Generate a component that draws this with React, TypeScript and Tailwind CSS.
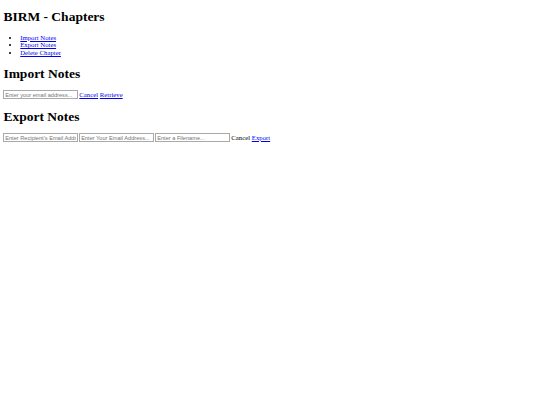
import React from 'react';

const inputCls =
  'w-[74.3px] h-[9px] box-border px-[0.85px] py-0 border border-[#a9a9a9] bg-white text-[5.63px] leading-none text-black placeholder:text-[#757575] font-["Liberation_Sans",Arial,sans-serif] outline-none';

const linkCls = 'text-[#0000ee] underline';
const headCls = 'text-[13.5px] leading-[15.5px] font-bold my-[9.05px]';

export default function App() {
  return (
    <div className="m-[3.375px] text-[6.75px] leading-[7.76px] text-black font-['Liberation_Serif','Times_New_Roman',serif]">
      <h1 className={headCls}>BIRM - Chapters</h1>

      <ul className="list-disc pl-[16.875px] my-[6.75px]">
        <li>
          <a href="#" className={linkCls}>Import Notes</a>
        </li>
        <li>
          <a href="#" className={linkCls}>Export Notes</a>
        </li>
        <li>
          <a href="#" className={linkCls}>Delete Chapter</a>
        </li>
      </ul>

      {/* Import */}
      <h1 className={headCls}>Import Notes</h1>
      <div className="flex items-center gap-[1.7px] h-[9px]">
        <input className={inputCls} placeholder="Enter your email address..." />
        <a href="#" className={linkCls}>Cancel</a>
        <a href="#" className={linkCls}>Retrieve</a>
      </div>

      {/* Export */}
      <h1 className={headCls}>Export Notes</h1>
      <div className="flex items-center gap-[1.7px] h-[9px]">
        <input className={inputCls} placeholder="Enter Recipient's Email Address..." />
        <input className={inputCls} placeholder="Enter Your Email Address..." />
        <input className={inputCls} placeholder="Enter a Filename..." />
        <span>Cancel</span>
        <a href="#" className={linkCls}>Export</a>
      </div>
    </div>
  );
}
